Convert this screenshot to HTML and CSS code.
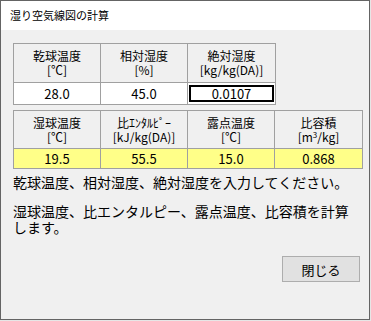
FILE: index.html
```html
<!DOCTYPE html>
<html lang="ja">
<head>
<meta charset="utf-8">
<title>湿り空気線図の計算</title>
<link rel="stylesheet" href="styles.css">
</head>
<body>
<div class="window">
  <div class="titlebar">湿り空気線図の計算</div>
  <div class="content">
    <div class="grid grid3">
      <div class="head"><span>乾球温度<br>[℃]</span></div>
      <div class="head"><span>相対湿度<br>[%]</span></div>
      <div class="head"><span>絶対湿度<br>[kg/kg(DA)]</span></div>
      <div class="val input">28.0</div>
      <div class="val input">45.0</div>
      <div class="val input"><span class="focus">0.0107</span></div>
    </div>
    <div class="grid grid4">
      <div class="head"><span>湿球温度<br>[℃]</span></div>
      <div class="head"><span>比ｴﾝﾀﾙﾋﾟｰ<br>[kJ/kg(DA)]</span></div>
      <div class="head"><span>露点温度<br>[℃]</span></div>
      <div class="head"><span>比容積<br>[m<sup>3</sup>/kg]</span></div>
      <div class="val out">19.5</div>
      <div class="val out">55.5</div>
      <div class="val out">15.0</div>
      <div class="val out">0.868</div>
    </div>
    <p class="msg msg1">乾球温度、相対湿度、絶対湿度を入力してください。</p>
    <p class="msg msg2">湿球温度、比エンタルピー、露点温度、比容積を計算<br>します。</p>
    <div class="actions"><button class="btn">閉じる</button></div>
  </div>
</div>
</body>
</html>
```
FILE: styles.css
```css
html, body {
  margin: 0;
  padding: 0;
}
body {
  background: #e6e6e6;
  font-family: "Noto Sans CJK JP", "Noto Sans", sans-serif;
  color: #000;
}
.window {
  width: 370px;
  height: 320px;
  box-sizing: border-box;
  border: 1px solid #646464;
  background: #f0f0f0;
  display: flex;
  flex-direction: column;
}
.titlebar {
  height: 29px;
  background: #fff;
  font-size: 11px;
  line-height: 29px;
  padding-left: 9px;
}
.content {
  flex: 1;
  padding: 13px 9px 0 12px;
  display: flex;
  flex-direction: column;
}
.grid {
  display: grid;
  gap: 1px;
  background: #a0a0a0;
  border: 1px solid #a0a0a0;
  align-self: flex-start;
}
.grid3 {
  grid-template-columns: 86px 86px 87px;
  grid-template-rows: 38px 21px;
}
.grid4 {
  margin-top: 5px;
  grid-template-columns: 86px 86px 86px 87px;
  grid-template-rows: 37px 19px;
}
.head {
  background: #f0f0f0;
  font-size: 12px;
  line-height: 14px;
  display: flex;
  align-items: center;
  justify-content: center;
  text-align: center;
}
.head sup {
  font-size: 8px;
  line-height: 0;
  vertical-align: 4px;
}
.val {
  font-size: 13px;
  display: flex;
  align-items: center;
  justify-content: center;
}
.input {
  background: #fff;
}
.out {
  background: #ffff88;
}
.focus {
  align-self: stretch;
  margin: 2px 1px;
  flex: 1;
  border: 2px solid #000;
  display: flex;
  align-items: center;
  justify-content: center;
}
.msg {
  margin: 0;
  font-size: 14px;
  line-height: 16px;
}
.msg1 {
  margin-top: 5px;
}
.msg2 {
  margin-top: 13px;
}
.actions {
  margin-top: 21px;
  display: flex;
  justify-content: flex-end;
}
.btn {
  width: 78px;
  height: 26px;
  box-sizing: border-box;
  border: 1px solid #adadad;
  background: #e1e1e1;
  font-family: "Noto Sans CJK JP", sans-serif;
  font-size: 13px;
  padding: 0;
  color: #000;
}
```
